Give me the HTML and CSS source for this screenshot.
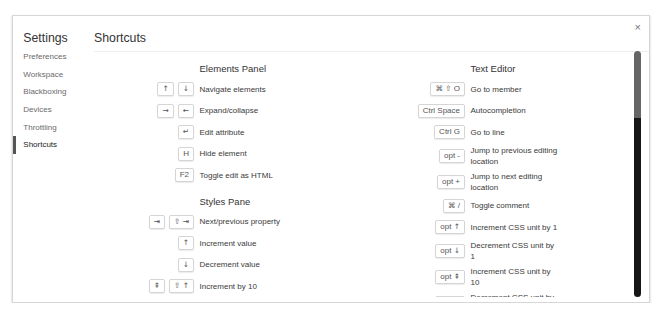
FILE: index.html
```html
<!DOCTYPE html>
<html lang="en">
<head>
    <meta charset="UTF-8">
    <title>Settings - Shortcuts</title>
    <link rel="stylesheet" href="styles.css">
</head>
<body>
    <div class="dialog">
        <!-- Sidebar -->
        <div class="sidebar">
            <div class="sidebar-title">Settings</div>
            <ul class="tabs">
                <li>Preferences</li>
                <li>Workspace</li>
                <li>Blackboxing</li>
                <li>Devices</li>
                <li>Throttling</li>
                <li class="selected">Shortcuts</li>
            </ul>
        </div>

        <!-- Main panel -->
        <div class="main">
            <div class="main-header">Shortcuts</div>
            <div class="main-content">
                <div class="column">
                    <div class="section">
                        <div class="section-title">Elements Panel</div>
                        <div class="row"><div class="keys"><span class="key"><i>↑</i></span><span class="key"><i>↓</i></span></div><div class="desc">Navigate elements</div></div>
                        <div class="row"><div class="keys"><span class="key"><i>→</i></span><span class="key"><i>←</i></span></div><div class="desc">Expand/collapse</div></div>
                        <div class="row"><div class="keys"><span class="key"><i>↵</i></span></div><div class="desc">Edit attribute</div></div>
                        <div class="row"><div class="keys"><span class="key">H</span></div><div class="desc">Hide element</div></div>
                        <div class="row"><div class="keys"><span class="key">F2</span></div><div class="desc">Toggle edit as HTML</div></div>
                    </div>
                    <div class="section">
                        <div class="section-title">Styles Pane</div>
                        <div class="row"><div class="keys"><span class="key"><i>⇥</i></span><span class="key"><i>⇧ ⇥</i></span></div><div class="desc">Next/previous property</div></div>
                        <div class="row"><div class="keys"><span class="key"><i>↑</i></span></div><div class="desc">Increment value</div></div>
                        <div class="row"><div class="keys"><span class="key"><i>↓</i></span></div><div class="desc">Decrement value</div></div>
                        <div class="row"><div class="keys"><span class="key"><i>⇞</i></span><span class="key"><i>⇧ ↑</i></span></div><div class="desc">Increment by 10</div></div>
                    </div>
                </div>

                <div class="column">
                    <div class="section">
                        <div class="section-title">Text Editor</div>
                        <div class="row"><div class="keys"><span class="key"><i>⌘ ⇧</i> O</span></div><div class="desc">Go to member</div></div>
                        <div class="row"><div class="keys"><span class="key">Ctrl Space</span></div><div class="desc">Autocompletion</div></div>
                        <div class="row"><div class="keys"><span class="key">Ctrl G</span></div><div class="desc">Go to line</div></div>
                        <div class="row"><div class="keys"><span class="key">opt -</span></div><div class="desc">Jump to previous editing location</div></div>
                        <div class="row"><div class="keys"><span class="key">opt +</span></div><div class="desc">Jump to next editing location</div></div>
                        <div class="row"><div class="keys"><span class="key"><i>⌘</i> /</span></div><div class="desc">Toggle comment</div></div>
                        <div class="row"><div class="keys"><span class="key">opt <i>↑</i></span></div><div class="desc">Increment CSS unit by 1</div></div>
                        <div class="row"><div class="keys"><span class="key">opt <i>↓</i></span></div><div class="desc">Decrement CSS unit by 1</div></div>
                        <div class="row"><div class="keys"><span class="key">opt <i>⇞</i></span></div><div class="desc">Increment CSS unit by 10</div></div>
                        <div class="row"><div class="keys"><span class="key">opt <i>⇟</i></span></div><div class="desc">Decrement CSS unit by 10</div></div>
                    </div>
                </div>
            </div>
        </div>

        <span class="close">×</span>
        <div class="scrollbar"></div>
    </div>
</body>
</html>
```

FILE: styles.css
```css
body { margin: 0; background: #fff; font-family: "Liberation Sans", Arial, sans-serif; color: #333; }

.dialog { position: relative; display: flex; box-sizing: border-box; width: 638px; height: 288px; margin: 15px 0 0 12px; background: #fff; border: 1px solid #d6d6d6; box-shadow: 0 1px 2px rgba(0, 0, 0, 0.22); }

/* sidebar */
.sidebar { width: 81px; flex: none; }
.sidebar-title { padding: 15px 0 0 10.3px; font-size: 12.3px; line-height: 15px; color: #333; }
.tabs { list-style: none; margin: 2.2px 0 0; padding: 0; }
.tabs li { padding-left: 10.3px; font-size: 8px; line-height: 17.6px; color: #6a6a6a; }
.tabs li.selected { color: #222; box-shadow: inset 3px 0 0 #555; }

/* main panel */
.main { flex: 1; display: flex; flex-direction: column; min-width: 0; }
.main-header { padding: 15px 0 5px; font-size: 12.3px; line-height: 15px; color: #333; border-bottom: 1px solid #eee; }
.main-content { flex: 1; display: flex; gap: 77px; padding-top: 8px; margin-bottom: 5px; overflow: hidden; }

.section + .section { margin-top: 7px; }
.section-title { padding-left: 105.5px; font-size: 9.5px; line-height: 18.3px; color: #333; }

.row { display: grid; grid-template-columns: 100px 88.5px; column-gap: 5.5px; align-items: center; box-sizing: border-box; min-height: 21.5px; padding: 2px 0; }
.keys { display: flex; justify-content: flex-end; gap: 4px; }
.key { box-sizing: border-box; height: 14px; min-width: 14px; padding: 0 4px; font-size: 8px; line-height: 12px; text-align: center; white-space: nowrap; color: #555; background: #fff; border: 1px solid #d5d5d5; border-radius: 2px; box-shadow: 0 1px 1px rgba(0, 0, 0, 0.08); }
.key i { font-style: normal; font-family: "DejaVu Sans", sans-serif; font-size: 7.5px; }
.desc { font-size: 8px; line-height: 11px; color: #3a3a3a; }

/* overlays */
.close { position: absolute; top: 6px; right: 8px; font-size: 11px; line-height: 10px; color: #777; }
.scrollbar { position: absolute; left: 621px; top: 35px; width: 7px; height: 246px; border-radius: 3.5px; background: linear-gradient(#666 0 67px, #161616 67px); }
```
